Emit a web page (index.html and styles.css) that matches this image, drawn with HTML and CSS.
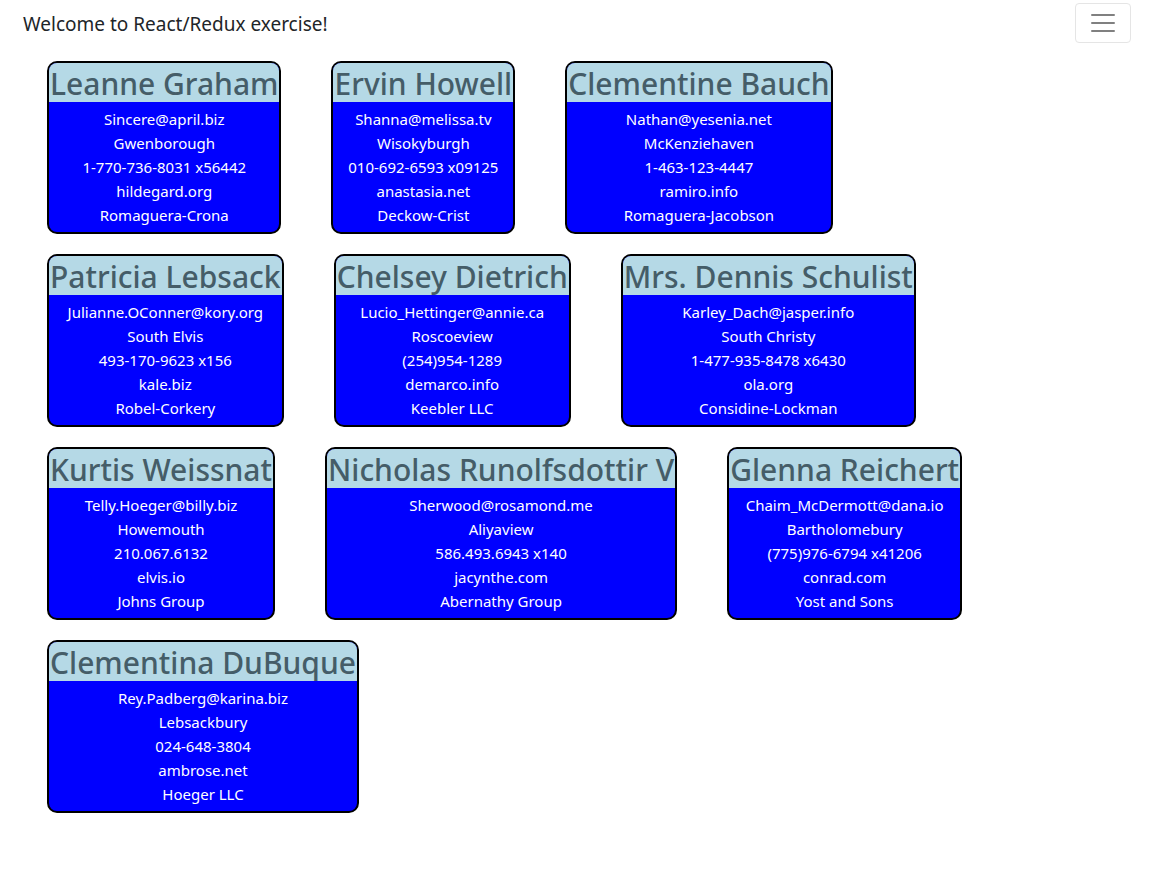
FILE: index.html
```html
<!DOCTYPE html>
<html lang="en">
<head>
<meta charset="utf-8">
<meta name="viewport" content="width=device-width, initial-scale=1">
<title>React/Redux exercise</title>
<link rel="stylesheet" href="styles.css">
</head>
<body>
<header class="navbar">
  <a class="brand" href="#">Welcome to React/Redux exercise!</a>
  <button class="toggler" type="button" aria-label="Toggle navigation">
    <svg class="toggler-icon" viewBox="0 0 30 30" aria-hidden="true"><path d="M4 7h22M4 15h22M4 23h22" fill="none" stroke="#808080" stroke-width="2" stroke-linecap="round"/></svg>
  </button>
</header>
<main class="users">
  <article class="card"><h2 class="name">Leanne Graham</h2><div class="details"><p>Sincere@april.biz</p><p>Gwenborough</p><p>1-770-736-8031 x56442</p><p>hildegard.org</p><p>Romaguera-Crona</p></div></article>
  <article class="card"><h2 class="name">Ervin Howell</h2><div class="details"><p>Shanna@melissa.tv</p><p>Wisokyburgh</p><p>010-692-6593 x09125</p><p>anastasia.net</p><p>Deckow-Crist</p></div></article>
  <article class="card"><h2 class="name">Clementine Bauch</h2><div class="details"><p>Nathan@yesenia.net</p><p>McKenziehaven</p><p>1-463-123-4447</p><p>ramiro.info</p><p>Romaguera-Jacobson</p></div></article>
  <article class="card"><h2 class="name">Patricia Lebsack</h2><div class="details"><p>Julianne.OConner@kory.org</p><p>South Elvis</p><p>493-170-9623 x156</p><p>kale.biz</p><p>Robel-Corkery</p></div></article>
  <article class="card"><h2 class="name">Chelsey Dietrich</h2><div class="details"><p>Lucio_Hettinger@annie.ca</p><p>Roscoeview</p><p>(254)954-1289</p><p>demarco.info</p><p>Keebler LLC</p></div></article>
  <article class="card"><h2 class="name">Mrs. Dennis Schulist</h2><div class="details"><p>Karley_Dach@jasper.info</p><p>South Christy</p><p>1-477-935-8478 x6430</p><p>ola.org</p><p>Considine-Lockman</p></div></article>
  <article class="card"><h2 class="name">Kurtis Weissnat</h2><div class="details"><p>Telly.Hoeger@billy.biz</p><p>Howemouth</p><p>210.067.6132</p><p>elvis.io</p><p>Johns Group</p></div></article>
  <article class="card"><h2 class="name">Nicholas Runolfsdottir V</h2><div class="details"><p>Sherwood@rosamond.me</p><p>Aliyaview</p><p>586.493.6943 x140</p><p>jacynthe.com</p><p>Abernathy Group</p></div></article>
  <article class="card"><h2 class="name">Glenna Reichert</h2><div class="details"><p>Chaim_McDermott@dana.io</p><p>Bartholomebury</p><p>(775)976-6794 x41206</p><p>conrad.com</p><p>Yost and Sons</p></div></article>
  <article class="card"><h2 class="name">Clementina DuBuque</h2><div class="details"><p>Rey.Padberg@karina.biz</p><p>Lebsackbury</p><p>024-648-3804</p><p>ambrose.net</p><p>Hoeger LLC</p></div></article>
</main>
</body>
</html>
```
FILE: styles.css
```css
* {
  box-sizing: border-box;
}

body {
  margin: 0;
  background: #fff;
  color: #212529;
  font-family: "Segoe UI", "Noto Sans", "Open Sans", sans-serif;
  font-size: 15px;
  line-height: 24px;
}

.navbar {
  display: flex;
  align-items: center;
  justify-content: space-between;
  padding: 3px 32px 3px 23px;
}

.brand {
  padding-top: 2px;
  color: #212529;
  font-size: 19px;
  line-height: 30px;
  text-decoration: none;
}

.toggler {
  display: flex;
  align-items: center;
  justify-content: center;
  width: 56px;
  height: 40px;
  padding: 0;
  border: 1px solid #e5e5e5;
  border-radius: 4px;
  background: transparent;
}

.toggler-icon {
  width: 30px;
  height: 30px;
}

.users {
  display: flex;
  flex-wrap: wrap;
  gap: 20px 50px;
  padding: 15px 100px 20px 47px;
}

.card {
  overflow: hidden;
  border: 2px solid #000;
  border-radius: 10px;
  background: #00f;
  color: #fff;
  text-align: center;
}

.name {
  margin: 0;
  padding: 2px 1px 0;
  background: #b5d9e6;
  color: #455d68;
  font-size: 30px;
  font-weight: 500;
  line-height: 37px;
  white-space: nowrap;
}

.details {
  padding: 5px 12px;
}

.details p {
  margin: 0;
}
```
